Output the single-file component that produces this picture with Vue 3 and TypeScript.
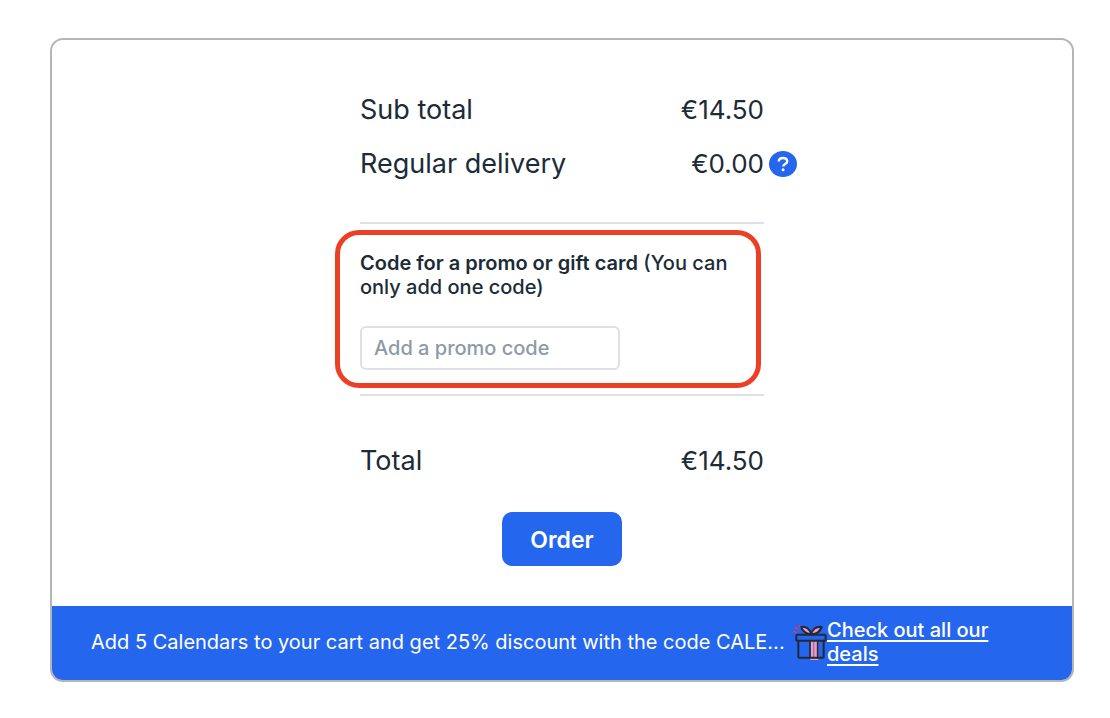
<script setup lang="ts">
import { ref } from 'vue'

interface SummaryRow {
  label: string
  amount: string
  help?: boolean
}

const rows: SummaryRow[] = [
  { label: 'Sub total', amount: '€14.50' },
  { label: 'Regular delivery', amount: '€0.00', help: true },
]
const total: SummaryRow = { label: 'Total', amount: '€14.50' }
const promoCode = ref('')
</script>

<template>
  <main class="card">
    <form class="summary" @submit.prevent>
      <section class="costs">
        <div v-for="row in rows" :key="row.label" class="row">
          <span>{{ row.label }}</span>
          <span class="amount">{{ row.amount }}</span>
          <button v-if="row.help" type="button" class="help" aria-label="Delivery information">
            <svg viewBox="0 0 28 26" width="28" height="26" aria-hidden="true">
              <ellipse cx="14" cy="13" rx="14" ry="13" fill="#2566ee" />
              <path d="M9.800 10.600C9.800 8.300 11.700 7 14 7s4.200 1.300 4.200 3.400c0 2.700-4 2.500-4 5.100" fill="none" stroke="#fff" stroke-width="2.400" />
              <circle cx="14.100" cy="18.800" r="1.500" fill="#fff" />
            </svg>
          </button>
        </div>
      </section>

      <section class="promo">
        <label for="promo-code"><strong>Code for a promo or gift card</strong> (You can only add one code)</label>
        <input id="promo-code" v-model="promoCode" type="text" placeholder="Add a promo code" />
      </section>

      <section class="total">
        <div class="row">
          <span>{{ total.label }}</span>
          <span class="amount">{{ total.amount }}</span>
        </div>
        <button type="submit" class="order">Order</button>
      </section>
    </form>

    <footer class="banner">
      <p>Add 5 Calendars to your cart and get 25% discount with the code CALE...</p>
      <svg class="gift" viewBox="2 0 102 111" width="34" height="37" aria-hidden="true">
        <path d="M54 48h24v60H54z" fill="#f59ab5" />
        <path d="M62 50h4v54h-4z" fill="#7c78d8" />
        <path d="M57 31C50 18 40 10 32 12c2 10 12 16 25 19zM57 31c3-10 12-18 25-18-4 10-14 16-25 18z" fill="#f59ab5" />
        <g fill="none" stroke="#232936" stroke-width="6" stroke-linejoin="round" stroke-linecap="round">
          <rect x="12" y="32" width="88" height="18" rx="3" />
          <path d="M18 50v48q0 3 3 3h70q3 0 3-3V50" />
          <path d="M53 50v51M76 50v51" stroke-width="5" />
          <path d="M57 31C43 30 29 22 26 9c17-3 28 8 31 22zM57 31c3-15 14-25 31-22-4 15-17 21-31 22z" />
        </g>
        <path d="M5 23l7 2M10 10l6 6M20 4l2 6" stroke="#c0417b" stroke-width="5" stroke-linecap="round" />
      </svg>
      <a href="#deals">Check out all our deals</a>
    </footer>
  </main>
</template>

<style>
body {
  background: #fff;
}
</style>

<style scoped>
.card {
  box-sizing: border-box;
  margin: 38px 36px 36px 50px;
  border: 2px solid #b3b6b9;
  border-radius: 13px;
  overflow: hidden;
  color: #1b2b38;
  font-family: Inter, "Open Sans", sans-serif;
  font-size: 20px;
  font-weight: 500;
  line-height: 24px;
}

.summary {
  box-sizing: border-box;
  max-width: 404px;
  margin: 0 auto;
  padding: 43px 0 40px;
}

.costs {
  padding-bottom: 31px;
  border-bottom: 2px solid #dde1e6;
}

.row {
  position: relative;
  display: flex;
  align-items: center;
  justify-content: space-between;
  height: 54px;
  font-size: 27px;
  font-weight: 400;
}

.amount {
  font-size: 26px;
}

.help {
  position: absolute;
  left: 100%;
  margin-left: 5px;
  padding: 0;
  border: 0;
  background: none;
  cursor: pointer;
}

.help svg {
  display: block;
}

.promo {
  margin: 6px 3px 6px -25px;
  padding: 16px 20px 13px;
  border: 5px solid #ec4026;
  border-radius: 24px;
}

.promo label {
  display: block;
  margin-bottom: 27px;
}

.promo strong {
  font-weight: 600;
}

.promo input {
  box-sizing: border-box;
  display: block;
  width: 260px;
  height: 44px;
  padding: 0 12px;
  border: 2px solid #dde1e6;
  border-radius: 6px;
  background: #fff;
  color: inherit;
  font: inherit;
}

.promo input::placeholder {
  color: #8d9ba7;
  opacity: 1;
}

.total {
  padding-top: 38px;
  border-top: 2px solid #dde1e6;
}

.order {
  display: block;
  width: 120px;
  height: 54px;
  margin: 24px auto 0;
  padding: 2px 0 0;
  border: 0;
  border-radius: 10px;
  background: #2566ee;
  color: #fff;
  font: inherit;
  font-size: 23px;
  font-weight: 600;
  cursor: pointer;
}

.banner {
  display: flex;
  align-items: center;
  padding: 12px 72px 14px 39px;
  background: #2566ee;
  color: #fff;
}

.banner p {
  flex: 1;
  min-width: 0;
  margin: 0;
  overflow: hidden;
  font-weight: 400;
  white-space: nowrap;
}

.gift {
  flex: none;
}

.banner a {
  flex: none;
  width: 173px;
  color: inherit;
  text-decoration: underline;
  text-decoration-thickness: 2px;
  text-underline-offset: 3px;
}
</style>
